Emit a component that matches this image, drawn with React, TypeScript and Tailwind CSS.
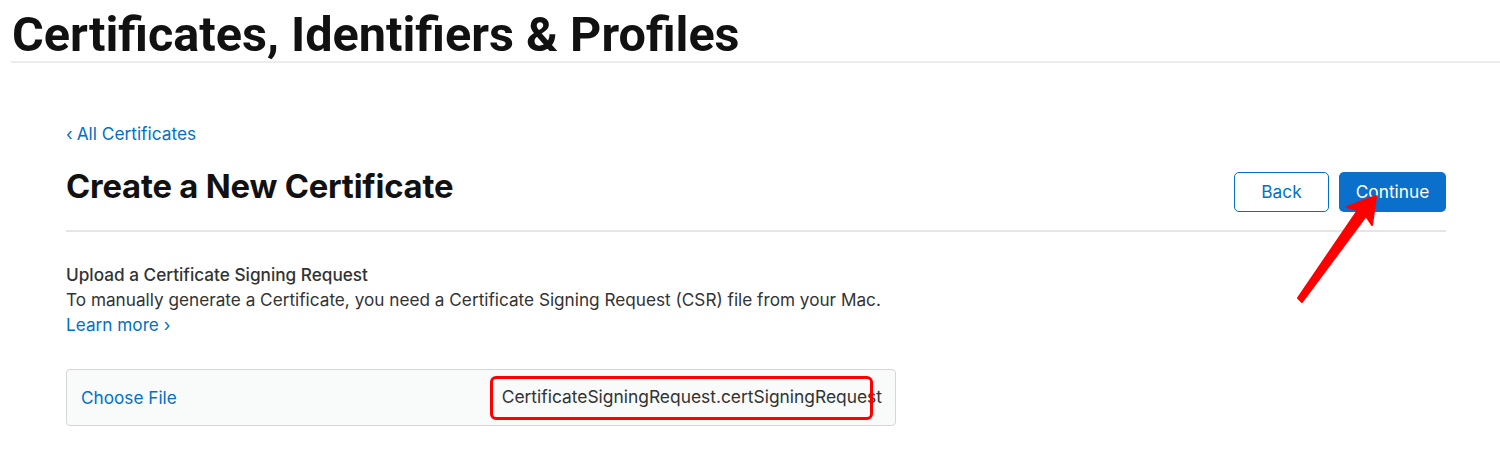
import React from "react";

export default function App() {
  const sf = { fontFamily: "Inter, 'Liberation Sans', sans-serif" };
  return (
    <div className="relative w-[1500px] h-[476px] bg-white overflow-hidden" style={sf}>
      <header className="ml-[11px] h-[63px] border-b-2 border-[#ececec]">
        <h1
          className="pl-[1px] pt-[10px] text-[48.6px] leading-[50px] font-bold text-[#111]"
          style={{ fontFamily: "Roboto, 'Liberation Sans', sans-serif" }}
        >
          Certificates, Identifiers &amp; Profiles
        </h1>
      </header>
      <main className="pl-[66px] pr-[54px]">
        <div className="pt-[60px] text-[17.3px] leading-[22px] text-[#0070c9]">
          <span className="mr-[4px]">‹</span>All Certificates
        </div>
        <div className="flex items-center justify-between h-[87px] border-b-2 border-[#e5e5e5] pb-[1px]">
          <h2 className="text-[32.8px] font-bold text-[#111] tracking-[-0.2px]">Create a New Certificate</h2>
          <div className="flex gap-[10px] pt-[10px]">
            <button className="w-[95px] h-[40px] rounded-[5px] border border-[#0070c9] text-[17.3px] text-[#0070c9] bg-white">
              Back
            </button>
            <button className="w-[107px] h-[40px] rounded-[5px] bg-[#0b6fcc] text-[17.3px] text-white">
              Continue
            </button>
          </div>
        </div>
        <div className="pt-[30px] text-[17.2px] leading-[25px] text-[#333]">
          <div className="font-medium">Upload a Certificate Signing Request</div>
          <div>To manually generate a Certificate, you need a Certificate Signing Request (CSR) file from your Mac.</div>
          <div className="text-[#0070c9]">Learn more ›</div>
        </div>
        <div className="mt-[32px] w-[830px] h-[57px] rounded-[4px] border border-[#d6d6d6] bg-[#f9fafa] flex items-center justify-between pl-[14px] pr-[13px]">
          <span className="text-[17.2px] text-[#0070c9]">Choose File</span>
          <span className="relative text-[17.4px] text-[#333]">
            CertificateSigningRequest.certSigningRequest
            <span className="absolute left-[-12px] right-[9px] top-[-8px] bottom-[-9px] border-[3px] border-[#ff0000] rounded-[6px]" />
          </span>
        </div>
      </main>
      <svg className="absolute left-0 top-0 pointer-events-none" width="1500" height="476">
        <polygon points="1298,298 1302,302 1366,216 1372,225 1376,196 1347,207 1358,210" fill="#ff0000" stroke="#ff0000" strokeWidth="2" strokeLinejoin="round" />
      </svg>
    </div>
  );
}
